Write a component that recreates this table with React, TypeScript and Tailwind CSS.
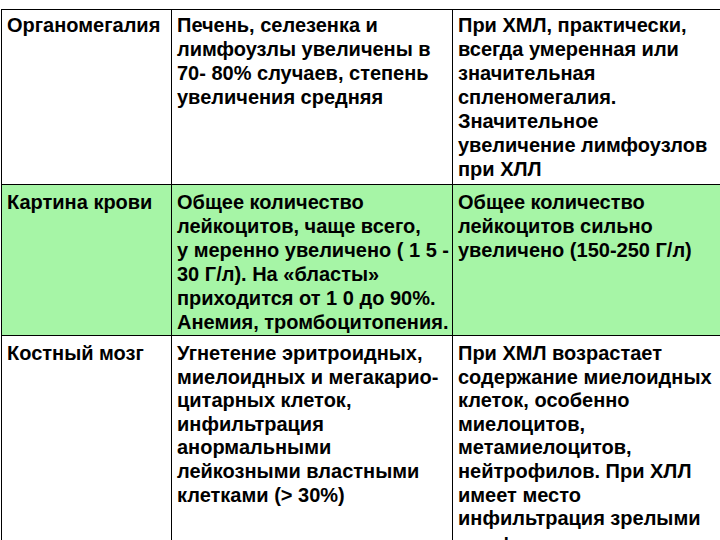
import React from "react";

type Row = {
  bg: string;
  h: string;
  pt: string;
  lh: string;
  c1: string[];
  c2: string[];
  c3: string[];
};

const rows: Row[] = [
  {
    bg: "bg-white",
    h: "h-[175px]",
    pt: "pt-[3px]",
    lh: "leading-[24px]",
    c1: ["Органомегалия"],
    c2: [
      "Печень, селезенка и",
      "лимфоузлы увеличены в",
      "70- 80% случаев, степень",
      "увеличения средняя",
    ],
    c3: [
      "При ХМЛ, практически,",
      "всегда умеренная или",
      "значительная",
      "спленомегалия.",
      "Значительное",
      "увеличение лимфоузлов",
      "при ХЛЛ",
    ],
  },
  {
    bg: "bg-[#a6f5a6]",
    h: "h-[151px]",
    pt: "pt-[5px]",
    lh: "leading-[24px]",
    c1: ["Картина крови"],
    c2: [
      "Общее количество",
      "лейкоцитов, чаще всего,",
      "у меренно увеличено ( 1 5 -",
      "30 Г/л). На «бласты»",
      "приходится от 1 0 до 90%.",
      "Анемия, тромбоцитопения.",
    ],
    c3: ["Общее количество", "лейкоцитов сильно", "увеличено (150-250 Г/л)"],
  },
  {
    bg: "bg-white",
    h: "h-[260px]",
    pt: "pt-[6px]",
    lh: "leading-[23.6px]",
    c1: ["Костный мозг"],
    c2: [
      "Угнетение эритроидных,",
      "миелоидных и мегакарио-",
      "цитарных клеток,",
      "инфильтрация",
      "анормальными",
      "лейкозными властными",
      "клетками (> 30%)",
    ],
    c3: [
      "При ХМЛ возрастает",
      "содержание миелоидных",
      "клеток, особенно",
      "миелоцитов,",
      "метамиелоцитов,",
      "нейтрофилов. При ХЛЛ",
      "имеет место",
      "инфильтрация зрелыми",
      "лимфоцитами",
    ],
  },
];

function Cell({
  lines,
  w,
  pt,
  lh,
}: {
  lines: string[];
  w: string;
  pt: string;
  lh: string;
}) {
  return (
    <div className={`${w} shrink-0 border-r border-black pl-[5px] ${pt}`}>
      {lines.map((l, i) => (
        <div
          key={i}
          className={`whitespace-nowrap ${lh} ${i === 8 ? "mt-[3px]" : ""}`}
        >
          {l}
        </div>
      ))}
    </div>
  );
}

export default function App() {
  return (
    <div
      className="w-[720px] h-[540px] overflow-hidden bg-white pt-[9px] pl-[1px] text-black font-bold text-[20px]"
      style={{ fontFamily: '"Liberation Sans", Arial, sans-serif' }}
    >
      <div className="w-[1000px] border-l border-t border-black">
        {rows.map((r, i) => (
          <div key={i} className={`flex ${r.h} ${r.bg} border-b border-black`}>
            <Cell lines={r.c1} w="w-[170px]" pt={r.pt} lh={r.lh} />
            <Cell lines={r.c2} w="w-[281px]" pt={r.pt} lh={r.lh} />
            <Cell lines={r.c3} w="w-[300px]" pt={r.pt} lh={r.lh} />
          </div>
        ))}
      </div>
    </div>
  );
}
